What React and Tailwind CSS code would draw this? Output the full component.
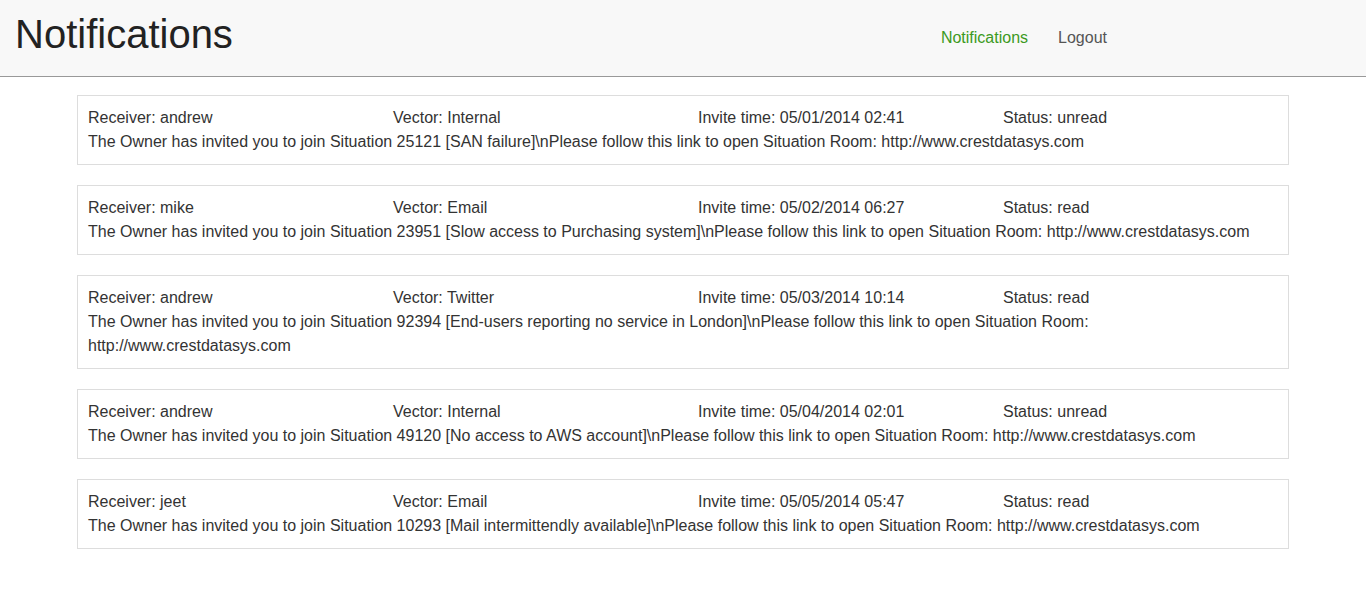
import React from "react";

const items = [
  {
    receiver: "andrew",
    vector: "Internal",
    time: "05/01/2014 02:41",
    status: "unread",
    id: "25121",
    title: "SAN failure",
  },
  {
    receiver: "mike",
    vector: "Email",
    time: "05/02/2014 06:27",
    status: "read",
    id: "23951",
    title: "Slow access to Purchasing system",
  },
  {
    receiver: "andrew",
    vector: "Twitter",
    time: "05/03/2014 10:14",
    status: "read",
    id: "92394",
    title: "End-users reporting no service in London",
  },
  {
    receiver: "andrew",
    vector: "Internal",
    time: "05/04/2014 02:01",
    status: "unread",
    id: "49120",
    title: "No access to AWS account",
  },
  {
    receiver: "jeet",
    vector: "Email",
    time: "05/05/2014 05:47",
    status: "read",
    id: "10293",
    title: "Mail intermittendly available",
  },
];

function Notification(props) {
  const n = props.item;
  return (
    <div className="border border-[#ddd] p-[10px] mb-[20px] text-[16px] leading-[24px] text-[#333]">
      <div className="grid grid-cols-4 -mx-[15px]">
        <div className="px-[15px]">Receiver: {n.receiver}</div>
        <div className="px-[15px]">Vector: {n.vector}</div>
        <div className="px-[15px]">Invite time: {n.time}</div>
        <div className="px-[15px]">Status: {n.status}</div>
      </div>
      <div>
        {"The Owner has invited you to join Situation " +
          n.id +
          " [" +
          n.title +
          "]\\nPlease follow this link to open Situation Room: http://www.crestdatasys.com"}
      </div>
    </div>
  );
}

export default function App() {
  return (
    <div className="min-h-screen bg-white font-['Liberation_Sans',Arial,sans-serif]">
      <header className="flex items-center h-[77px] bg-[#f8f8f8] border-b border-[#999]">
        <h1 className="self-start mt-[12px] ml-[15px] text-[40px] leading-[44px] text-[#222]">
          Notifications
        </h1>
        <nav className="flex ml-auto mr-[244px] text-[16px] leading-[20px]">
          <a className="px-[15px] text-[#3c9a22]">Notifications</a>
          <a className="px-[15px] text-[#555]">Logout</a>
        </nav>
      </header>
      <main className="mx-[77px] mt-[18px]">
        {items.map((item, i) => (
          <Notification key={i} item={item} />
        ))}
      </main>
    </div>
  );
}
